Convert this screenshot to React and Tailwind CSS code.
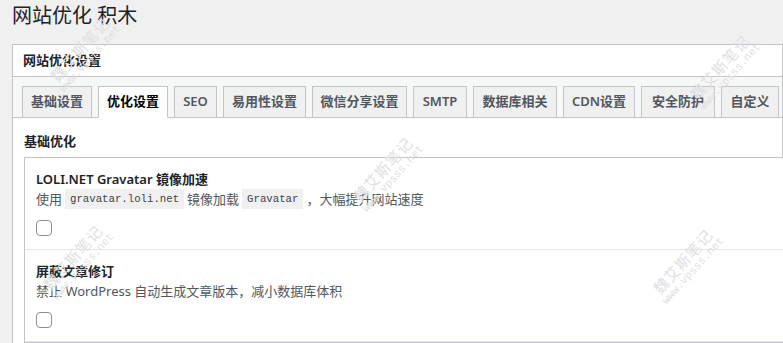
import React, { useState } from 'react';

const tabs = [
  { label: '基础设置', w: 'w-[70px]' },
  { label: '优化设置', w: 'w-[70px]' },
  { label: 'SEO', w: 'w-[43px]' },
  { label: '易用性设置', w: 'w-[83px]' },
  { label: '微信分享设置', w: 'w-[95px]' },
  { label: 'SMTP', w: 'w-[54px]' },
  { label: '数据库相关', w: 'w-[84px]' },
  { label: 'CDN设置', w: 'w-[72px]' },
  { label: '安全防护', w: 'w-[74px]' },
  { label: '自定义', w: 'w-[58px]' },
];

// faint diagonal watermark, sits over the content
const Watermark = ({ className }) => (
  <div
    className={`pointer-events-none absolute flex -rotate-[48deg] flex-col items-center leading-[14px] text-[#e0e0e2] ${className}`}
  >
    <span className="text-[15px] tracking-[1px]">魏艾斯笔记</span>
    <span className="font-['Liberation_Mono',monospace] text-[11px]">www.vpsss.net</span>
  </div>
);

const Code = ({ children }) => (
  <code className="mx-[3px] inline-block h-[20px] bg-[#f0f0f1] px-[5px] align-top font-['Liberation_Mono',monospace] text-[10.7px] leading-[20px] text-[#3c434a]">
    {children}
  </code>
);

const Checkbox = ({ checked, onChange }) => (
  <button
    onClick={onChange}
    className="block h-[16px] w-[16px] rounded-[4px] border border-[#8c8f94] bg-white"
  >
    {checked && (
      <svg viewBox="0 0 16 16" className="h-[14px] w-[14px] text-[#2271b1]">
        <path d="M3 8l3 3 6-6" fill="none" stroke="currentColor" strokeWidth="2" />
      </svg>
    )}
  </button>
);

export default function App() {
  const [active, setActive] = useState(1);
  const [gravatar, setGravatar] = useState(false);
  const [revisions, setRevisions] = useState(false);

  return (
    <div className="relative h-[343px] w-[783px] overflow-hidden bg-[#f0f0f1] font-['Noto_Sans','Noto_Sans_CJK_SC',sans-serif] text-[#1d2327]">
      <h1 className="mb-[13px] ml-3 pt-[1px] text-[20px] font-normal leading-[30px] text-[#1d2327]">
        网站优化 积木
      </h1>

      <div className="ml-3 w-[771px] border border-[#c3c4c7] bg-white">
        {/* box header */}
        <div className="flex h-[32px] items-center border-b border-[#c3c4c7] pl-[10px] text-[13px] font-semibold">
          网站优化设置
        </div>

        {/* tab strip */}
        <div className="flex gap-[6px] border-b border-[#c3c4c7] bg-[#f6f7f7] pl-[9px] pt-[9px]">
          {tabs.map((t, i) => (
            <button
              key={t.label}
              onClick={() => setActive(i)}
              className={`-mb-px flex h-[32px] items-center justify-center border border-[#c3c4c7] text-[13px] font-semibold ${t.w} ${
                active === i
                  ? 'border-b-white bg-white text-[#000]'
                  : 'bg-[#f0f0f1] text-[#50575e]'
              }`}
            >
              {t.label}
            </button>
          ))}
        </div>

        {/* content */}
        <div className="pl-[11px] pt-[13px]">
          <div className="mb-[6px] text-[13px] font-semibold leading-[20px]">基础优化</div>

          <div className="w-[790px] border border-[#c3c4c7] bg-white">
            <div className="border-b border-[#e6e6e8] pb-[13px] pl-[11px] pt-[11px]">
              <div className="text-[13px] font-semibold leading-[20px]">LOLI.NET Gravatar 镜像加速</div>
              <div className="h-[20px] text-[13px] leading-[20px] text-[#50575e]">
                使用<Code>gravatar.loli.net</Code>镜像加载<Code>Gravatar</Code>，大幅提升网站速度
              </div>
              <div className="mt-[11px]">
                <Checkbox checked={gravatar} onChange={() => setGravatar(!gravatar)} />
              </div>
            </div>

            <div className="border-b border-[#e6e6e8] pb-[13px] pl-[11px] pt-[11px]">
              <div className="text-[13px] font-semibold leading-[20px]">屏蔽文章修订</div>
              <div className="text-[13px] leading-[20px] text-[#50575e]">
                禁止 WordPress 自动生成文章版本，减小数据库体积
              </div>
              <div className="mt-[11px]">
                <Checkbox checked={revisions} onChange={() => setRevisions(!revisions)} />
              </div>
            </div>
          </div>
        </div>
      </div>

      <Watermark className="left-[42px] top-[40px]" />
      <Watermark className="left-[682px] top-[58px]" />
      <Watermark className="left-[345px] top-[160px]" />
      <Watermark className="left-[35px] top-[248px]" />
      <Watermark className="left-[645px] top-[252px]" />
    </div>
  );
}
